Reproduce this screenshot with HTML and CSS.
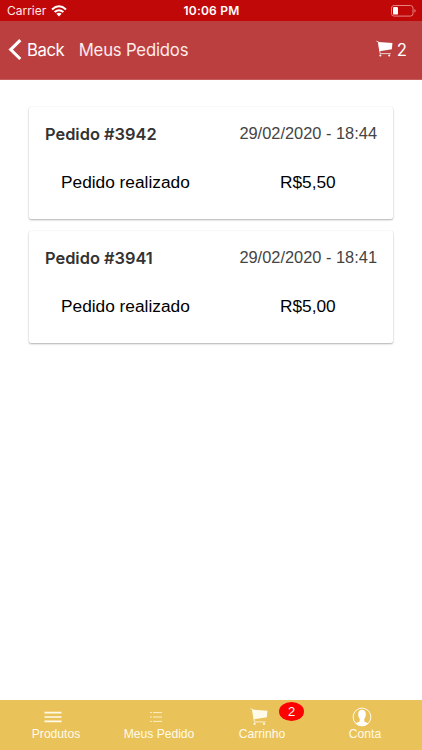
FILE: index.html
```html
<!DOCTYPE html>
<html lang="pt-BR">
<head>
<meta charset="utf-8">
<title>Meus Pedidos</title>
<link rel="stylesheet" href="styles.css">
</head>
<body>
<svg width="0" height="0" class="defs">
  <symbol id="cart" viewBox="0 0 18 18">
    <path d="M.5 .7 2.400 1.300 4.400 13.900H15.600" fill="none" stroke="currentColor" stroke-width=".8"/>
    <path d="M2.300 1.600 17.400 2.700 16.800 9.200 3.700 11.300z" fill="currentColor"/>
    <circle cx="4.600" cy="15.800" r="1.100" fill="currentColor"/><circle cx="14" cy="15.800" r="1.100" fill="currentColor"/>
  </symbol>
</svg>
<div class="status">
  <div class="carrier">Carrier
    <svg width="16" height="12" viewBox="0 0 16 12"><g fill="none" stroke="#fff" stroke-width="2"><path d="M1 4.400Q8-1.800 15 4.400"/><path d="M3.600 7.100Q8 3.300 12.400 7.100"/></g><path d="M5.400 8.700Q8 6.700 10.600 8.700L8 11.400z" fill="#fff"/></svg>
  </div>
  <div class="time">10:06 PM</div>
  <svg class="battery" width="25" height="12" viewBox="0 0 25 12"><rect x=".5" y=".5" width="21.500" height="10.600" rx="2.600" fill="none" stroke="#e78383"/><rect x="2" y="2" width="5" height="7.600" rx="1.200" fill="#fff"/><path d="M23.400 4v3.600q1.200-.4 1.200-1.800T23.400 4z" fill="#e78383"/></svg>
</div>
<header class="header">
  <svg width="14" height="22" viewBox="0 0 14 22"><path d="M12.300 1.200 2.700 10.600 12.300 20" fill="none" stroke="#fff" stroke-width="3.100"/></svg>
  <span class="back">Back</span>
  <h1 class="title">Meus Pedidos</h1>
  <svg class="top-cart" width="17" height="18"><use href="#cart"/></svg>
  <span class="count">2</span>
</header>
<main class="orders">
  <article class="card">
    <div class="row"><h2 class="order">Pedido #3942</h2><time class="date">29/02/2020 - 18:44</time></div>
    <div class="detail"><span class="state">Pedido realizado</span><span class="price">R$5,50</span></div>
  </article>
  <article class="card">
    <div class="row"><h2 class="order">Pedido #3941</h2><time class="date">29/02/2020 - 18:41</time></div>
    <div class="detail"><span class="state">Pedido realizado</span><span class="price">R$5,00</span></div>
  </article>
</main>
<nav class="tabs">
  <div class="tab"><svg width="18" height="18" viewBox="0 0 18 18"><path d="M.5 4.700h17M.5 9h17M.5 13.300h17" stroke="#fffbe9" stroke-width="1.700"/></svg><span>Produtos</span></div>
  <div class="tab"><svg width="18" height="18" viewBox="0 0 18 18"><path d="M3 4.600h1.800M6 4.600h9M3 9h1.800M6 9h9M3 13.400h1.800M6 13.400h9" stroke="#fff1c8" stroke-width="1"/></svg><span>Meus Pedido</span></div>
  <div class="tab"><svg width="18" height="18"><use href="#cart"/></svg><span>Carrinho</span><b class="badge">2</b></div>
  <div class="tab"><svg class="avatar" width="20" height="20" viewBox="0 0 20 20"><circle cx="10" cy="10" r="8.900" fill="none" stroke="#fff" stroke-width=".9"/><path d="M10 2.800c-2.700 0-3.800 1.700-3.800 4.400 0 2 .5 3.300 1.500 4.600v2.200c0 1-2.700 1.300-4.100 2.300C5.200 18 7.400 19 10 19s4.800-1 6.400-2.700c-1.400-1-4.100-1.300-4.100-2.300v-2.200c1-1.300 1.500-2.600 1.500-4.600 0-2.700-1.100-4.400-3.800-4.400z" fill="#fff"/></svg><span>Conta</span></div>
</nav>
</body>
</html>
```
FILE: styles.css
```css
* { box-sizing: border-box; }
body {
  margin: 0;
  height: 750px;
  display: flex;
  flex-direction: column;
  background: #fff;
  font-family: "Liberation Sans", Arial, sans-serif;
  white-space: nowrap;
  overflow: hidden;
}
.defs { position: absolute; }
svg { display: block; flex: none; }
h1, h2 { margin: 0; font-weight: 400; }

.status {
  height: 21px;
  flex: none;
  display: grid;
  grid-template-columns: 1fr auto 1fr;
  align-items: center;
  padding: 1px 6px 0 7px;
  background: #c10808;
  color: #fff;
  font: 12px/20px Inter, sans-serif;
}
.carrier { display: flex; gap: 5px; align-items: center; letter-spacing: -.02px; color: #ffe9e6; }
.time { font-weight: 600; letter-spacing: .2px; }
.battery { justify-self: end; }

.header {
  height: 59px;
  flex: none;
  display: flex;
  align-items: center;
  padding: 0 15px 0 8px;
  background: #bc3f40;
  border-bottom: 1px solid #c45c5d;
  color: #fff;
  font-family: Inter, sans-serif;
  font-size: 16.700px;
}
.back { margin-left: 5px; width: 37px; letter-spacing: -.4px; }
.title { margin-left: 14.700px; font-size: 16.700px; letter-spacing: -.18px; color: #ffeceb; }
.top-cart { margin-left: auto; margin-top: -3px; }
.count { margin-left: 4px; }

.orders {
  flex: 1;
  display: flex;
  flex-direction: column;
  gap: 12px;
  padding: 27px 29px 0;
}
.card {
  height: 112px;
  padding: 16px 16px 0;
  border-radius: 2px;
  background: #fff;
  box-shadow: 0 1px 2px rgba(0, 0, 0, .3), 0 0 1px rgba(0, 0, 0, .12);
}
.row { display: flex; justify-content: space-between; line-height: 22px; }
.order { font: 600 16.400px/22px Inter, sans-serif; color: #333; }
.date { font-size: 16.400px; line-height: 20px; color: #444; }
.detail { display: flex; margin: 27px 0 0 16px; font-size: 17.300px; line-height: 20px; color: #000; }
.state { width: 219px; }

.tabs {
  height: 50px;
  flex: none;
  display: grid;
  grid-template-columns: repeat(4, 103px);
  padding-left: 1px;
  background: #eac25a;
  color: #fffbe9;
  font-size: 12.100px;
}
.tab {
  position: relative;
  display: flex;
  flex-direction: column;
  align-items: center;
  padding-top: 8px;
}
.tab > .avatar { margin: -1px 0; }
.tab > span { line-height: 14px; margin: 1px 0 0 7px; }
.tab > .avatar + span { margin-top: 2px; margin-top: 1px; }
.badge {
  position: absolute;
  left: 72px;
  top: 2px;
  width: 25px;
  height: 19px;
  border-radius: 50%;
  background: #f00;
  color: #fff;
  text-align: center;
  font: 13px/19px "Liberation Sans", Arial, sans-serif;
}
```
